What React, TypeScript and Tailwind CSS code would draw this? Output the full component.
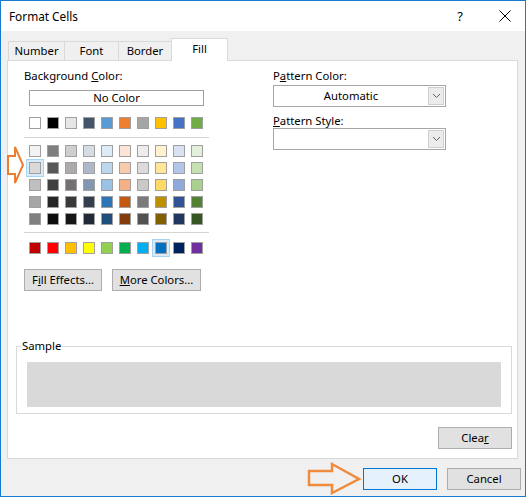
import React from "react";

const theme = ["#FFFFFF","#000000","#E7E6E6","#44546A","#5B9BD5","#ED7D31","#A5A5A5","#FFC000","#4472C4","#70AD47"];
const tints = [
  ["#F2F2F2","#7F7F7F","#D0CECE","#D6DCE4","#DDEBF7","#FCE4D6","#EDEDED","#FFF2CC","#D9E1F2","#E2EFDA"],
  ["#D9D9D9","#595959","#AEAAAA","#ADB9CA","#BDD7EE","#F8CBAD","#DBDBDB","#FFE699","#B4C6E7","#C6E0B4"],
  ["#BFBFBF","#404040","#757171","#8497B0","#9BC2E6","#F4B084","#C9C9C9","#FFD966","#8EA9DB","#A9D08E"],
  ["#A6A6A6","#262626","#3A3838","#333F4F","#2F75B5","#C65911","#7B7B7B","#BF8F00","#305496","#548235"],
  ["#808080","#0D0D0D","#171616","#222B35","#1F4E78","#833C0C","#525252","#806000","#203764","#375623"],
];
const standard = ["#C00000","#FF0000","#FFC000","#FFFF00","#92D050","#00B050","#00B0F0","#0070C0","#002060","#7030A0"];

function Swatch({ c, selected }: { c: string; selected?: boolean }) {
  return (
    <div
      className={
        "w-[12px] h-[12px] border border-[#a0a0a0] " +
        (selected ? "shadow-[0_0_0_2px_#d9ebf9,0_0_0_3px_#a9d3f2]" : "")
      }
      style={{ backgroundColor: c }}
    />
  );
}

function Row({ colors, sel }: { colors: string[]; sel?: number }) {
  return (
    <div className="flex gap-[6px] ml-[5px]">
      {colors.map((c, i) => (
        <Swatch key={i} c={c} selected={sel === i} />
      ))}
    </div>
  );
}

function Chevron() {
  return (
    <svg width="9" height="6" viewBox="0 0 9 6">
      <polyline points="1,1 4.5,4.5 8,1" fill="none" stroke="#606060" strokeWidth="1" />
    </svg>
  );
}

function Dropdown({ text }: { text?: string }) {
  return (
    <div className="w-[173px] h-[22px] border border-[#a6a6a6] bg-white flex">
      <div className="flex-1 flex items-center justify-center leading-[14px]">{text}</div>
      <div className="w-[16px] my-px mr-px bg-[#ececec] border border-[#cfcfcf] flex items-center justify-center">
        <Chevron />
      </div>
    </div>
  );
}

function Btn({ children, w, primary }: { children: React.ReactNode; w: string; primary?: boolean }) {
  return (
    <div
      className={
        "h-[22px] flex items-center justify-center leading-[14px] border " +
        w +
        (primary ? " bg-[#e5f1fb] border-[#0078d7]" : " bg-[#e1e1e1] border-[#adadad]")
      }
    >
      {children}
    </div>
  );
}

export default function App() {
  return (
    <div className="w-[529px] h-[499px] bg-white text-[11.3px] text-black" style={{ fontFamily: '"Noto Sans", "Open Sans", sans-serif' }}>
      <div className="relative w-[526px] h-[497px] border border-[#1979d3] bg-[#f0f0f0] flex flex-col">
        {/* title bar */}
        <div className="h-[30px] bg-white flex items-center pl-[8px] shrink-0">
          <span className="leading-[14px] text-[11.8px]">Format Cells</span>
          <span className="ml-auto mr-[36px] leading-[14px] text-[13px]">?</span>
          <svg className="mr-[14px]" width="12" height="12" viewBox="0 0 12 12">
            <path d="M0.5 0.5 L11.5 11.5 M11.5 0.5 L0.5 11.5" stroke="#000" strokeWidth="1" />
          </svg>
        </div>
        {/* tabs */}
        <div className="h-[29px] flex items-end ml-[7px] shrink-0">
          <div className="w-[56px] h-[19px] border-l border-t border-[#d9d9d9] flex items-center justify-center leading-[14px]">Number</div>
          <div className="w-[54px] h-[19px] border-l border-t border-[#d9d9d9] flex items-center justify-center leading-[14px]">Font</div>
          <div className="w-[53px] h-[19px] border-l border-t border-[#d9d9d9] flex items-center justify-center leading-[14px]">Border</div>
          <div className="relative z-10 -mb-px w-[57px] h-[23px] border-l border-t border-r border-[#d9d9d9] bg-white flex items-center justify-center leading-[14px] pb-[2px]">Fill</div>
        </div>
        {/* panel */}
        <div className="ml-[6px] w-[511px] h-[399px] bg-white border border-[#d9d9d9] flex flex-col shrink-0">
          <div className="flex">
            <div className="ml-[16px] w-[190px] flex flex-col">
              <div className="pt-[8px] leading-[14px]">
                Background <span className="underline">C</span>olor:
              </div>
              <div className="mt-[7px] ml-[5px] w-[175px] h-[16px] border border-[#a0a0a0] flex items-center justify-center leading-[14px]">
                No Color
              </div>
              <div className="mt-[11px]">
                <Row colors={theme} />
              </div>
              <div className="mt-[8px] h-px w-[185px] bg-[#d4d4d4]" />
              <div className="mt-[7px] flex flex-col gap-[5px]">
                {tints.map((r, i) => (
                  <Row key={i} colors={r} sel={i === 1 ? 0 : undefined} />
                ))}
              </div>
              <div className="mt-[7px] h-px w-[185px] bg-[#d4d4d4]" />
              <div className="mt-[9px]">
                <Row colors={standard} sel={7} />
              </div>
              <div className="mt-[15px] flex gap-[10px]">
                <Btn w="w-[78px]">
                  <span>F<span className="underline">i</span>ll Effects...</span>
                </Btn>
                <Btn w="w-[89px]">
                  <span><span className="underline">M</span>ore Colors...</span>
                </Btn>
              </div>
            </div>
            <div className="ml-[59px] flex flex-col">
              <div className="pt-[8px] leading-[14px]">
                P<span className="underline">a</span>ttern Color:
              </div>
              <div className="mt-[2px]">
                <Dropdown text="Automatic" />
              </div>
              <div className="mt-[7px] leading-[14px]">
                <span className="underline">P</span>attern Style:
              </div>
              <div>
                <Dropdown />
              </div>
            </div>
          </div>
          {/* sample */}
          <div className="mt-[55px] ml-[8px] w-[496px] h-[68px] relative border border-[#d9d9d9]">
            <span className="absolute left-[4px] -top-[8px] bg-white px-px leading-[14px]">Sample</span>
            <div className="ml-[10px] mt-[15px] w-[474px] h-[45px] bg-[#d9d9d9]" />
          </div>
          <div className="self-end mr-[5px] mt-[13px]">
            <Btn w="w-[74px]">
              <span>Clea<span className="underline">r</span></span>
            </Btn>
          </div>
        </div>
        {/* bottom buttons */}
        <div className="mt-[9px] flex justify-end gap-[10px] pr-[4px]">
          <Btn w="w-[74px]" primary>OK</Btn>
          <Btn w="w-[74px]">Cancel</Btn>
        </div>

        {/* annotation arrows */}
        <svg className="absolute left-[4px] top-[144px]" width="22" height="42" viewBox="0 0 22 42">
          <polygon points="3,11 10,11 10,2 18,20 10,38 10,29 3,29" fill="none" stroke="#ed7d31" strokeWidth="2" strokeLinejoin="miter" />
        </svg>
        <svg className="absolute left-[305px] top-[460px]" width="58" height="36" viewBox="0 0 58 36">
          <polygon points="3,10 26,10 26,3 53,18 26,32 26,24 3,24" fill="none" stroke="#f08a3c" strokeWidth="2.5" />
        </svg>
      </div>
    </div>
  );
}
